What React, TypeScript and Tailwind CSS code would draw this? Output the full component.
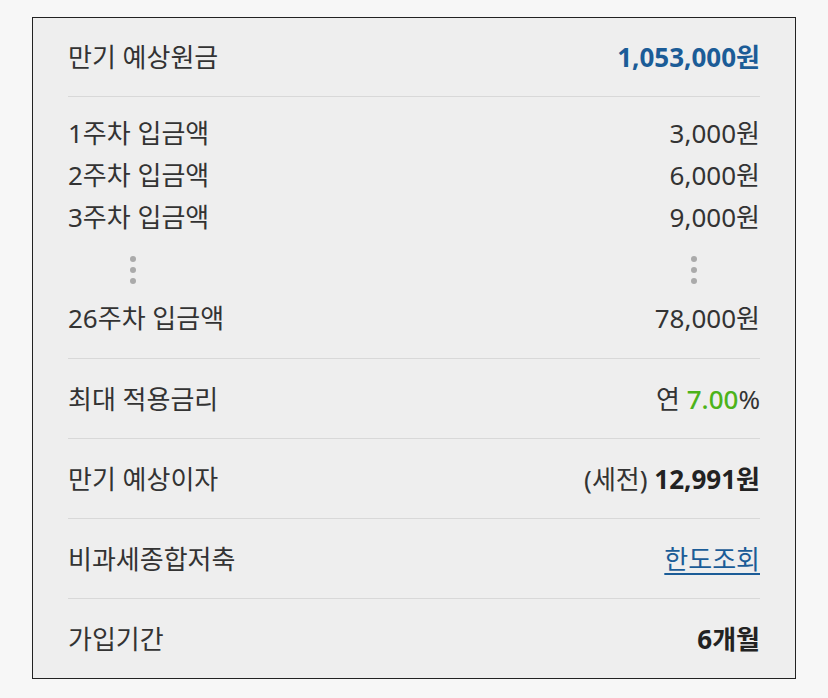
const FONT = "font-['Noto_Sans','Noto_Sans_CJK_KR',sans-serif]";

const WEEKS = [
  { label: '1주차 입금액', amount: '3,000원' },
  { label: '2주차 입금액', amount: '6,000원' },
  { label: '3주차 입금액', amount: '9,000원' },
];

function Dots() {
  return (
    <div className="flex flex-col gap-[5px]">
      <span className="block w-[6px] h-[6px] rounded-full bg-[#aaaaaa]" />
      <span className="block w-[6px] h-[6px] rounded-full bg-[#aaaaaa]" />
      <span className="block w-[6px] h-[6px] rounded-full bg-[#aaaaaa]" />
    </div>
  );
}

function Row({ label, children }: { label: string; children: React.ReactNode }) {
  return (
    <div className="h-[80px] flex items-center justify-between border-t border-[#d8d8d8]">
      <span>{label}</span>
      <span>{children}</span>
    </div>
  );
}

export default function App() {
  return (
    <div className={`min-h-[698px] bg-[#f7f7f7] px-8 pt-[17px] ${FONT} text-[26px] leading-[42px] text-[#333333]`}>
      <div className="border border-[#222222] bg-[#eeeeee] px-[35px]">
        {/* 만기 예상원금 */}
        <div className="h-[78px] flex items-center justify-between">
          <span>만기 예상원금</span>
          <span className="font-bold text-[#1b5c97]">1,053,000원</span>
        </div>

        {/* 주차별 입금액 */}
        <div className="border-t border-[#d8d8d8] pt-[15px] pb-[19px]">
          {WEEKS.map((w) => (
            <div key={w.label} className="h-[42px] flex items-center justify-between">
              <span>{w.label}</span>
              <span>{w.amount}</span>
            </div>
          ))}
          <div className="h-[59px] pt-[18px] flex justify-between pl-[62px] pr-[63px]">
            <Dots />
            <Dots />
          </div>
          <div className="h-[42px] flex items-center justify-between">
            <span>26주차 입금액</span>
            <span>78,000원</span>
          </div>
        </div>

        <Row label="최대 적용금리">
          연 <span className="font-medium text-[#4cb31a]">7.00</span>%
        </Row>
        <Row label="만기 예상이자">
          (세전) <span className="font-bold text-[#222222]">12,991원</span>
        </Row>
        <Row label="비과세종합저축">
          <a href="#" className="text-[#1b5c97] underline underline-offset-4">한도조회</a>
        </Row>
        <Row label="가입기간">
          <span className="font-bold text-[#222222]">6개월</span>
        </Row>
      </div>
    </div>
  );
}
